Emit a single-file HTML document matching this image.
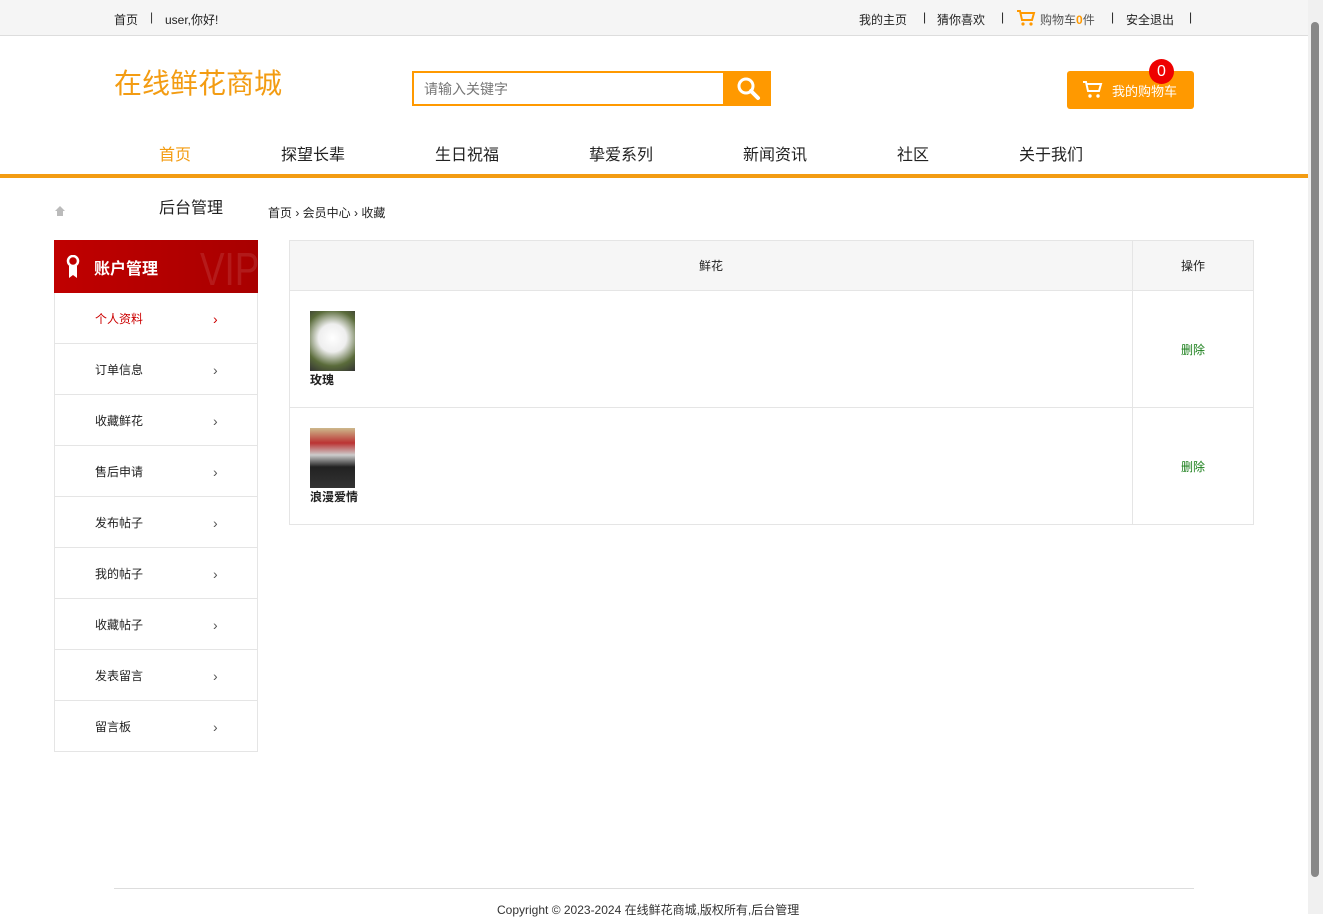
<!DOCTYPE html>
<html><head><meta charset="utf-8"><style>
*{margin:0;padding:0;box-sizing:border-box}
body{width:1323px;height:914px;overflow:hidden;font-family:"Liberation Sans","Noto Sans CJK SC",sans-serif;color:#222;background:#fff;position:relative;font-size:12px}
.abs{position:absolute;white-space:nowrap}
.top{position:absolute;left:0;top:0;width:1308px;height:36px;background:#f5f5f5;border-bottom:1px solid #ddd}
.sb{position:absolute;left:1308px;top:0;width:15px;height:914px;background:#f0f0f0}
.sb div{position:absolute;left:3px;top:22px;width:8px;height:855px;background:#888;border-radius:4px}
.nav{font-size:16px;top:141px}
.side{position:absolute;left:54px;top:240px;width:204px}
.side .h{height:53px;background:linear-gradient(90deg,#c00000,#a80000);color:#fff;font-size:16px;font-weight:bold;position:relative;overflow:hidden}
.side .it{height:51px;border:1px solid #e5e5e5;border-top:none;position:relative;font-size:12px;line-height:53px;padding-left:40px}
.side .it span{position:absolute;left:158px;top:0;color:#555;font-size:14px}
table{position:absolute;left:289px;top:240px;width:965px;border-collapse:collapse;font-size:12px}
td,th{border:1px solid #e5e5e5;font-weight:normal}
th{background:#f6f6f6;height:50px}
td{height:117px}
</style></head><body>
<div class="top"></div>
<div class="abs" style="left:114px;top:11px">首页</div>
<div class="abs" style="left:150px;top:10px;color:#333">|</div>
<div class="abs" style="left:165px;top:11px">user,你好!</div>
<div class="abs" style="left:859px;top:11px">我的主页</div>
<div class="abs" style="left:923px;top:10px">|</div>
<div class="abs" style="left:937px;top:11px">猜你喜欢</div>
<div class="abs" style="left:1001px;top:10px">|</div>
<svg class="abs" style="left:1016px;top:9px" width="20" height="18" viewBox="0 0 20 18"><path d="M1 2h3l2 9h10l2-7H5" fill="none" stroke="#f90" stroke-width="2"/><circle cx="7" cy="15" r="1.6" fill="#f90"/><circle cx="15" cy="15" r="1.6" fill="#f90"/></svg>
<div class="abs" style="left:1040px;top:11px;color:#555">购物车<b style="color:#f90">0</b>件</div>
<div class="abs" style="left:1111px;top:10px">|</div>
<div class="abs" style="left:1126px;top:11px">安全退出</div>
<div class="abs" style="left:1189px;top:10px">|</div>

<div class="abs" style="left:114px;top:62px;font-size:28px;color:#f39c12">在线鲜花商城</div>
<div class="abs" style="left:412px;top:71px;width:313px;height:35px;border:2px solid #f90;"></div>
<div class="abs" style="left:424px;top:79px;font-size:14px;color:#777">请输入关键字</div>
<div class="abs" style="left:725px;top:71px;width:46px;height:35px;background:#f90"></div>
<svg class="abs" style="left:736px;top:76px" width="26" height="26" viewBox="0 0 26 26"><circle cx="10" cy="10" r="7" fill="none" stroke="#fff" stroke-width="3"/><path d="M15 15l7 7" stroke="#fff" stroke-width="4" stroke-linecap="round"/></svg>
<div class="abs" style="left:1067px;top:71px;width:127px;height:38px;background:#f90;border-radius:3px"></div>
<svg class="abs" style="left:1082px;top:80px" width="22" height="20" viewBox="0 0 22 20"><path d="M1 2h3l2 9h11l2-7H5" fill="none" stroke="#fff" stroke-width="2"/><circle cx="8" cy="16" r="1.7" fill="#fff"/><circle cx="16" cy="16" r="1.7" fill="#fff"/></svg>
<div class="abs" style="left:1112px;top:81px;color:#fff;font-size:13px">我的购物车</div>
<div class="abs" style="left:1149px;top:59px;width:25px;height:25px;border-radius:50%;background:#e00;color:#fff;font-size:16px;text-align:center;line-height:25px">0</div>

<div class="abs nav" style="left:159px;color:#f39c12">首页</div>
<div class="abs nav" style="left:281px">探望长辈</div>
<div class="abs nav" style="left:435px">生日祝福</div>
<div class="abs nav" style="left:589px">挚爱系列</div>
<div class="abs nav" style="left:743px">新闻资讯</div>
<div class="abs nav" style="left:897px">社区</div>
<div class="abs nav" style="left:1019px">关于我们</div>
<div class="abs" style="left:0;top:174px;width:1308px;height:4px;background:#f39c12"></div>

<svg class="abs" style="left:54px;top:205px" width="12" height="12" viewBox="0 0 12 12"><path d="M6 1L1 6h2v5h6V6h2z" fill="#bbb"/></svg>
<div class="abs" style="left:159px;top:194px;font-size:16px">后台管理</div>
<div class="abs" style="left:268px;top:204px">首页 › 会员中心 › 收藏</div>

<div class="side">
<div class="h"><svg style="position:absolute;left:12px;top:15px" width="14" height="24" viewBox="0 0 14 24"><circle cx="7" cy="6" r="5" fill="none" stroke="#fff" stroke-width="2.5"/><path d="M3 11v12l4-3 4 3V11" fill="#fff"/></svg><span style="position:absolute;left:40px;top:15px">账户管理</span><span style="position:absolute;left:146px;top:2px;font-size:46px;color:rgba(255,255,255,.1);font-weight:normal;transform:scaleX(.8);transform-origin:left">VIP</span></div>
<div class="it" style="color:#c00">个人资料<span style="color:#c00">›</span></div>
<div class="it">订单信息<span>›</span></div>
<div class="it">收藏鲜花<span>›</span></div>
<div class="it">售后申请<span>›</span></div>
<div class="it">发布帖子<span>›</span></div>
<div class="it">我的帖子<span>›</span></div>
<div class="it">收藏帖子<span>›</span></div>
<div class="it">发表留言<span>›</span></div>
<div class="it">留言板<span>›</span></div>
</div>

<table>
<tr><th style="width:843px">鲜花</th><th>操作</th></tr>
<tr><td style="padding-left:20px"><div style="width:45px;height:60px;background:radial-gradient(circle at 50% 45%,#fff 0,#eee 35%,#5a6b3a 70%,#333 100%)"></div><b style="font-size:12px">玫瑰</b></td><td style="text-align:center;color:#1a7f1a">删除</td></tr>
<tr><td style="padding-left:20px"><div style="width:45px;height:60px;background:linear-gradient(180deg,#cdb98c 0,#b33 25%,#ccc 45%,#222 65%,#333 100%)"></div><b style="font-size:12px">浪漫爱情</b></td><td style="text-align:center;color:#1a7f1a">删除</td></tr>
</table>

<div class="abs" style="left:114px;top:888px;width:1080px;height:1px;background:#ddd"></div>
<div class="abs" style="left:497px;top:901px;font-size:12px;color:#333">Copyright © 2023-2024 在线鲜花商城,版权所有,后台管理</div>
<div class="sb"><div></div></div>
</body></html>
